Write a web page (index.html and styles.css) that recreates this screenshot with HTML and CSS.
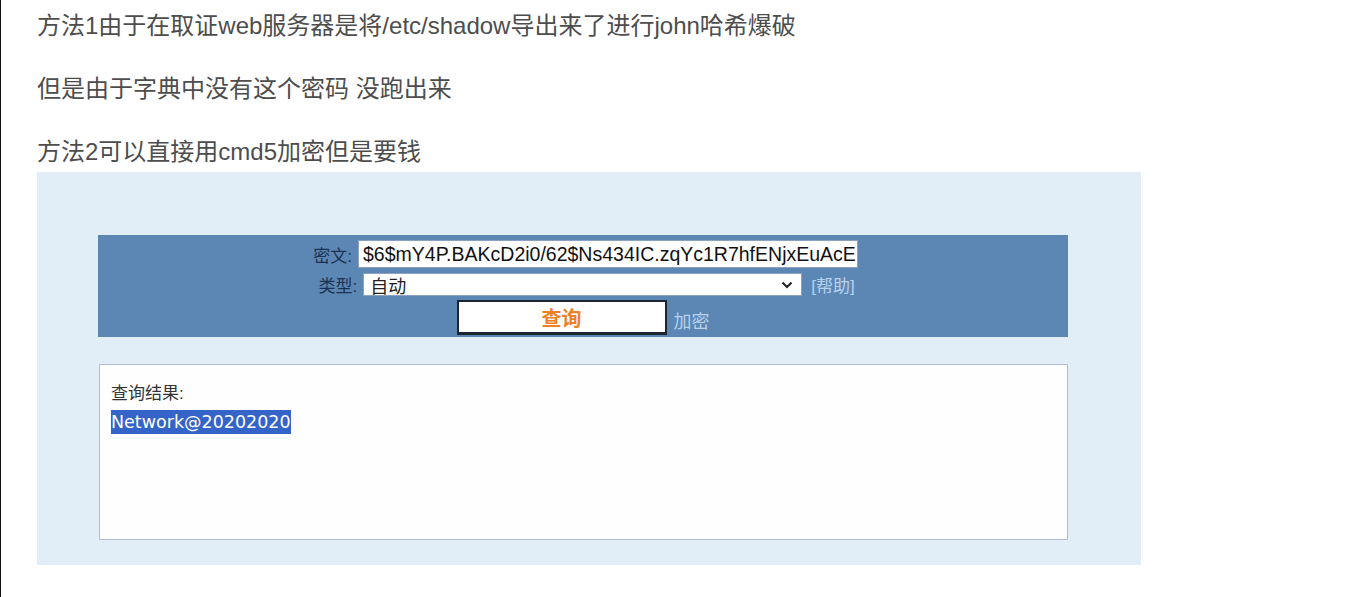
FILE: index.html
```html
<!DOCTYPE html>
<html lang="zh-CN">
<head>
<meta charset="utf-8">
<title>cmd5</title>
<link rel="stylesheet" href="styles.css">
</head>
<body>
<div class="page">
  <p class="para">方法1由于在取证web服务器是将/etc/shadow导出来了进行john哈希爆破</p>
  <p class="para">但是由于字典中没有这个密码 没跑出来</p>
  <p class="para last">方法2可以直接用cmd5加密但是要钱</p>
  <div class="shot">
    <div class="bar">
      <div class="row">
        <span class="label">密文:</span>
        <div class="input">$6$mY4P.BAKcD2i0/62$Ns434IC.zqYc1R7hfENjxEuAcE</div>
      </div>
      <div class="row row-type">
        <span class="label">类型:</span>
        <div class="select">
          <span class="select-text">自动</span>
          <svg class="chev" width="12" height="8" viewBox="0 0 12 8"><path d="M1.5 1.5 L6 6 L10.5 1.5" fill="none" stroke="#222" stroke-width="2"/></svg>
        </div>
        <span class="help">[帮助]</span>
      </div>
      <div class="row row-btn">
        <div class="btn">查询</div>
        <span class="link">加密</span>
      </div>
    </div>
    <div class="result">
      <div class="result-title">查询结果:</div>
      <span class="result-value">Network@20202020</span>
    </div>
  </div>
</div>
</body>
</html>
```
FILE: styles.css
```css
html, body {
  margin: 0;
  padding: 0;
  background: #ffffff;
}
body {
  font-family: "Liberation Sans", "Noto Sans CJK SC", sans-serif;
}
.page {
  min-height: 597px;
  box-sizing: border-box;
  border-left: 1px solid #111;
  padding: 8px 0 0 36px;
}
.para {
  margin: 0 0 27px 0;
  font-size: 24px;
  line-height: 36px;
  color: #4d4d4d;
}
.para.last {
  margin-bottom: 2px;
}
.shot {
  width: 1104px;
  height: 393px;
  box-sizing: border-box;
  background: #e2eef7;
  padding: 63px 73px 0 61px;
}
.bar {
  width: 970px;
  height: 102px;
  box-sizing: border-box;
  background: #5c87b4;
  padding-top: 5px;
  display: flex;
  flex-direction: column;
  align-items: center;
}
.row {
  display: flex;
  align-items: center;
  padding-right: 2px;
}
.label {
  width: 46px;
  margin-right: 6px;
  font-size: 17px;
  color: #1c3252;
  text-align: right;
  white-space: nowrap;
}
.input {
  width: 500px;
  height: 28px;
  box-sizing: border-box;
  background: #fff;
  border: 1px solid #8aa2bf;
  padding: 0 0 0 4px;
  font-size: 19.5px;
  line-height: 26px;
  color: #111;
  white-space: nowrap;
  overflow: hidden;
}
.row-type {
  margin-top: 4px;
  padding-right: 0;
}
.select {
  width: 439px;
  height: 23px;
  box-sizing: border-box;
  background: #fff;
  border: 1px solid #8aa2bf;
  display: flex;
  align-items: center;
  justify-content: space-between;
  padding: 0 8px 0 6px;
}
.select-text {
  font-size: 18px;
  color: #222;
}
.help {
  margin-left: 9px;
  font-size: 17px;
  color: #b7d2ef;
}
.row-btn {
  margin-top: 3px;
  padding-right: 0;
}
.btn {
  width: 210px;
  height: 35px;
  box-sizing: border-box;
  background: #fff;
  border: 2px solid #1d2630;
  border-bottom-width: 3px;
  display: flex;
  align-items: center;
  justify-content: center;
  font-size: 20px;
  font-weight: bold;
  color: #f08026;
}
.link {
  margin-left: 7px;
  font-size: 18px;
  color: #b7d2ef;
  padding-top: 4px;
}
.result {
  margin-top: 27px;
  margin-left: 1px;
  width: 969px;
  height: 176px;
  box-sizing: border-box;
  background: #fefefe;
  border: 1px solid #b6bec7;
  padding: 17px 11px 0 11px;
}
.result-title {
  font-size: 17px;
  line-height: 24px;
  color: #333;
}
.result-value {
  display: inline-block;
  margin-top: 4px;
  height: 24px;
  line-height: 24px;
  background: #3564c8;
  color: #fff;
  font-family: "DejaVu Sans", sans-serif;
  font-size: 17.5px;
}
```
